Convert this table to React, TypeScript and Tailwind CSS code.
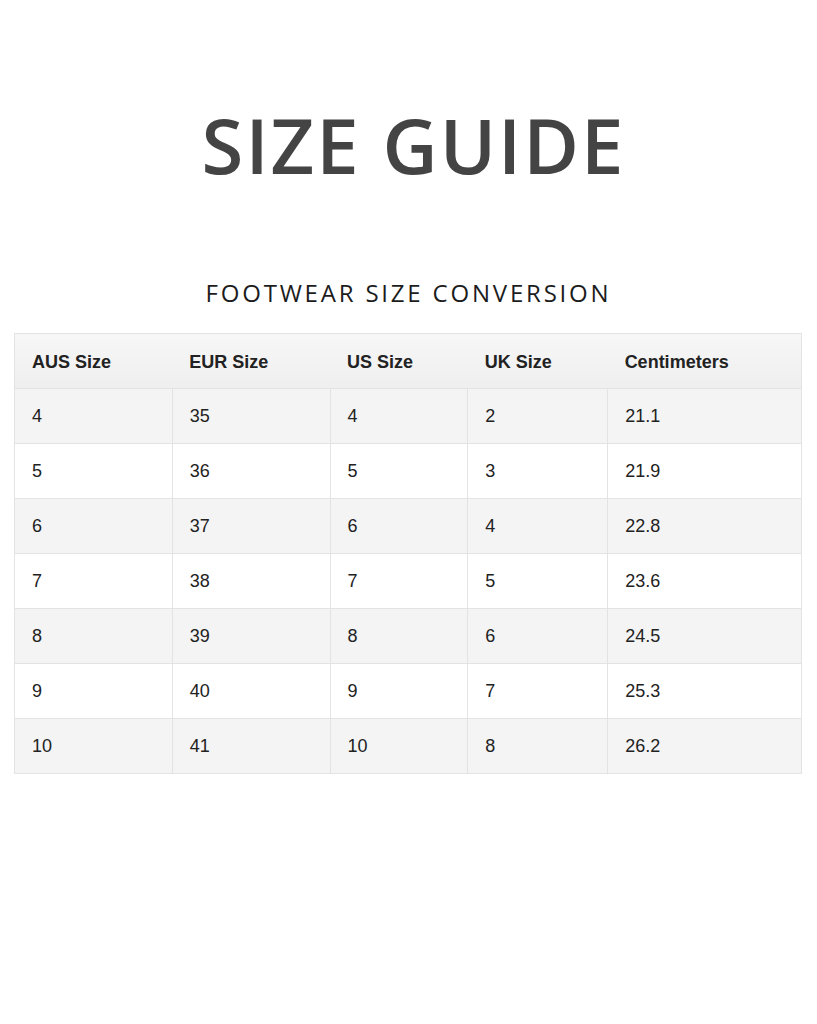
import React from 'react';

const headers = ['AUS Size', 'EUR Size', 'US Size', 'UK Size', 'Centimeters'];

const rows = [
  ['4', '35', '4', '2', '21.1'],
  ['5', '36', '5', '3', '21.9'],
  ['6', '37', '6', '4', '22.8'],
  ['7', '38', '7', '5', '23.6'],
  ['8', '39', '8', '6', '24.5'],
  ['9', '40', '9', '7', '25.3'],
  ['10', '41', '10', '8', '26.2'],
];

const colWidths = ['w-[158px]', 'w-[158px]', 'w-[138px]', 'w-[140px]', 'w-[194px]'];

const App: React.FC = () => {
  return (
    <div className="min-h-screen w-[817px] bg-white">
      {/* Titulo */}
      <div className="pt-[107px] text-center">
        <h1
          className="text-[76px] leading-[76px] font-semibold text-[#444444] tracking-[2px] pl-[10px]"
          style={{ fontFamily: '"Open Sans", "Liberation Sans", sans-serif' }}
        >
          SIZE GUIDE
        </h1>
        <h2
          className="mt-[95px] text-[24px] leading-[30px] text-[#1c1c1c] tracking-[2.8px]"
          style={{ fontFamily: '"Open Sans", "Liberation Sans", sans-serif' }}
        >
          FOOTWEAR SIZE CONVERSION
        </h2>
      </div>

      {/* Tabla */}
      <div className="mt-[25px] px-[14px]" style={{ fontFamily: '"Liberation Sans", Arial, sans-serif' }}>
        <table className="w-[788px] border-collapse border border-[#e3e3e3] text-[18px] text-[#222222]">
          <thead>
            <tr className="h-[55px] bg-gradient-to-b from-[#f7f7f7] to-[#efefef] border-b border-[#e0e0e0]">
              {headers.map((h, i) => (
                <th key={h} className={`${colWidths[i]} pl-[17px] pt-[3px] text-left font-bold`}>
                  {h}
                </th>
              ))}
            </tr>
          </thead>
          <tbody>
            {rows.map((r, ri) => (
              <tr key={ri} className={`h-[55px] ${ri % 2 === 0 ? 'bg-[#f4f4f4]' : 'bg-white'}`}>
                {r.map((c, ci) => (
                  <td
                    key={ci}
                    className={`${colWidths[ci]} pl-[17px] border border-[#e3e3e3]`}
                  >
                    {c}
                  </td>
                ))}
              </tr>
            ))}
          </tbody>
        </table>
      </div>
    </div>
  );
};

export default App;
